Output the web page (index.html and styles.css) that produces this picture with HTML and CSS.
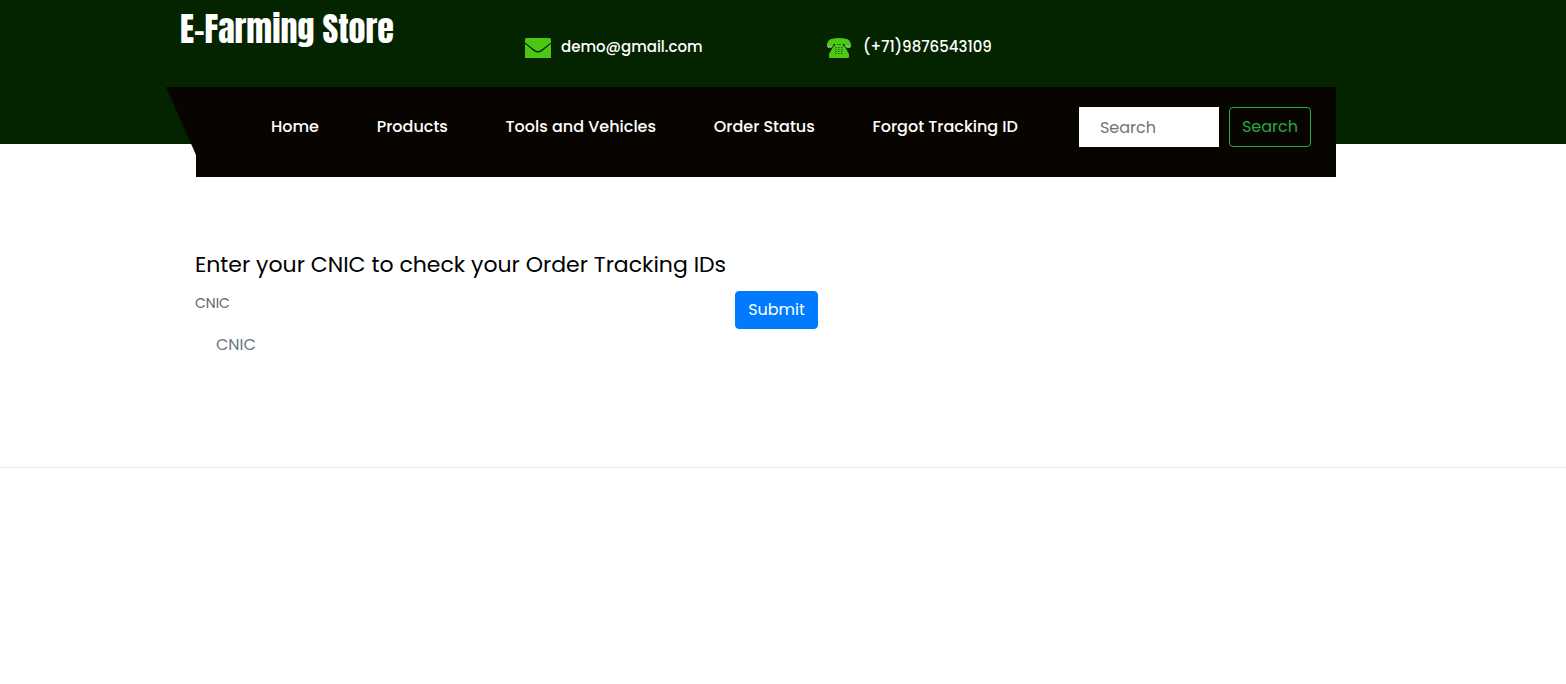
FILE: index.html
```html
<!DOCTYPE html>
<html lang="en">
<head>
<meta charset="utf-8">
<meta name="viewport" content="width=device-width, initial-scale=1">
<title>E-Farming Store</title>
<link rel="stylesheet" href="styles.css">
</head>
<body>
<header class="header">
  <div class="container topbar">
    <a class="logo" href="#">E-Farming Store</a>
    <a class="contact contact-mail" href="mailto:demo@gmail.com">
      <svg width="26" height="20" viewBox="0 0 26 20" aria-hidden="true"><path fill="#4cc714" d="M1.500 0h23Q26 0 26 1.500V4.500l-9.500 7.200q-3.500 2.600-7 0L0 4.500V1.500Q0 0 1.500 0zM0 5.800l8.800 7.100q4.200 3 8.400 0L26 5.800V20H0z"/></svg>
      <span>demo@gmail.com</span>
    </a>
    <a class="contact contact-phone" href="tel:+719876543109">
      <svg width="24" height="20" viewBox="0 0 24 20" aria-hidden="true"><path fill="#4cc714" d="M0 8.500V6Q1 2 4 1 12-1 20 1q3 1 4 5v2.500h-6.500V6H6.500v2.500z"/><path fill="#fff" d="M0 8.500h5.500l-1 1H1zM18.500 8.500H24l-1 1h-3.500z"/><path fill="#4cc714" d="M8 5h2v1.500h4V5h2v2.500l2 1.500 4 7v3q0 1-1 1H3q-1 0-1-1v-3l4-7 2-1.500z"/><path stroke="#1d6b08" stroke-width="1" stroke-dasharray="1.500 1.500" d="M8 9.500h8M8 11.500h8M8 13.500h8M8 15.500h8"/></svg>
      <span>(+71)9876543109</span>
    </a>
  </div>
  <div class="container">
    <nav class="navbar">
      <ul class="menu">
        <li><a href="#">Home</a></li>
        <li><a href="#">Products</a></li>
        <li><a href="#">Tools and Vehicles</a></li>
        <li><a href="#">Order Status</a></li>
        <li><a href="#">Forgot Tracking ID</a></li>
      </ul>
      <form class="search">
        <input class="search-input" type="search" placeholder="Search" aria-label="Search">
        <button class="btn btn-outline" type="submit">Search</button>
      </form>
    </nav>
  </div>
</header>
<main class="container">
  <form class="tracking">
    <h1 class="title">Enter your CNIC to check your Order Tracking IDs</h1>
    <div class="row">
      <div class="field">
        <label class="label" for="cnic">CNIC</label>
        <input class="text-input" id="cnic" type="text" placeholder="CNIC">
      </div>
      <button class="btn btn-primary" type="submit">Submit</button>
    </div>
  </form>
</main>
<hr class="divider">
</body>
</html>
```
FILE: styles.css
```css
* { box-sizing: border-box; }
body {
  margin: 0;
  background: #fff;
  color: #000;
  font-family: Poppins, Inter, sans-serif;
  font-size: 16px;
  line-height: 24px;
}
a { color: inherit; text-decoration: none; }
input, button { font: inherit; }
.container { max-width: 1336px; padding-left: 180px; }
.header { background: linear-gradient(#042400, #042400) top / 100% 144px no-repeat; }
.topbar { display: flex; height: 87px; }
.logo {
  width: 345px;
  padding-top: 8px;
  color: #fff;
  font: 400 34px/42px Impact, Anton, "Roboto Condensed", sans-serif;
  white-space: nowrap;
}
.contact {
  display: flex;
  align-items: center;
  gap: 10px;
  height: 24px;
  margin-top: 35px;
  color: #fff;
  font-size: 15px;
  font-weight: 500;
}
.contact svg { margin-top: 2px; }
.contact-mail { width: 302px; }
.contact-phone { gap: 12px; }
.navbar {
  position: relative;
  display: flex;
  align-items: flex-start;
  margin-left: 16px;
  padding: 20px 25px 30px 75px;
  background: #080500;
}
.navbar::before {
  content: "";
  position: absolute;
  top: 0;
  right: 100%;
  width: 30px;
  height: 68px;
  background: #080500;
  clip-path: polygon(0 0, 100% 0, 100% 100%);
}
.menu {
  display: flex;
  flex: 1;
  justify-content: space-between;
  margin: 8px 61px 0 0;
  padding: 0;
  list-style: none;
  color: #fff;
  font-weight: 500;
  white-space: nowrap;
}
.search { display: flex; gap: 10px; }
.search-input {
  width: 140px;
  height: 40px;
  padding: 0 21px;
  border: 0;
  background: #fff;
}
.search-input, .text-input { appearance: none; border-radius: 0; color: #495057; }
::placeholder { color: #6c757d; opacity: 1; }
.btn {
  padding: 6px 12px;
  border: 1px solid;
  border-radius: 4px;
}
.btn-outline { min-width: 82px; background: transparent; border-color: #28a745; color: #28a745; }
.tracking { padding: 71px 0 98px 15px; }
.title { margin: 0 0 10px; font-size: 22px; font-weight: 400; line-height: 33px; }
.row { display: flex; align-items: flex-start; }
.field { flex: 0 0 540px; }
.label { display: block; color: #666; font-size: 14px; line-height: 24px; }
.text-input {
  display: block;
  width: 510px;
  height: 50px;
  margin-top: 4px;
  padding: 0 21px;
  border: 0;
  background: transparent;
}
.btn-primary { min-width: 83px; background: #007bff; border-color: #007bff; color: #fff; }
.divider { margin: 0; border: 0; border-top: 1px solid #e5e5e5; }
```
